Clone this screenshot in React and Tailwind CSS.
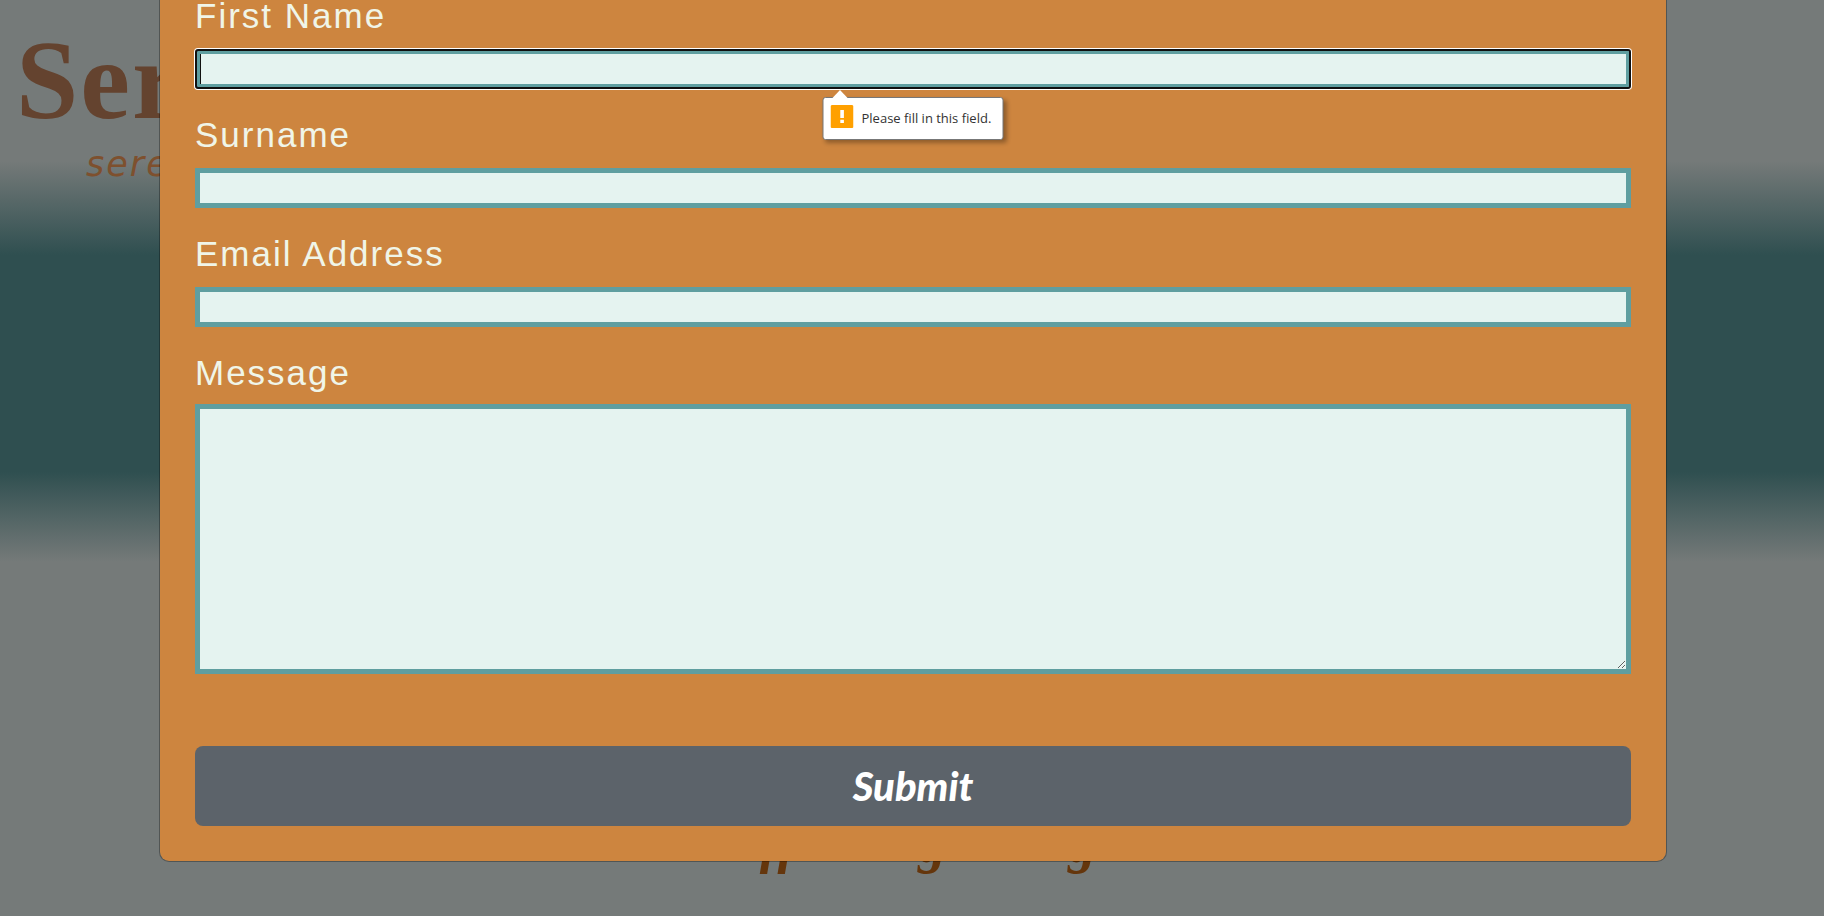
import React from "react";

const labelClass = "block text-[35px] leading-8 tracking-[2px] text-[#f0f5e8]";
const fieldClass =
  "block h-10 w-full border-[5px] border-[#5f9ea0] bg-[#e5f3f0] px-1 text-xl outline-none";

function ValidationBubble() {
  return (
    <div
      role="alert"
      className="absolute left-1/2 top-full z-10 mt-2 flex h-[43px] w-[181px] -translate-x-1/2 items-center gap-2 rounded-[3px] border border-[#777] bg-white pl-[7px] shadow-[3px_3px_4px_rgba(0,0,0,0.3)]"
    >
      <svg
        className="absolute -top-2 left-2 h-[9px] w-[17px]"
        viewBox="0 0 17 9"
        aria-hidden="true"
      >
        <path d="M0 9 L8.5 0 L17 9 Z" fill="#fff" />
      </svg>
      <svg className="mb-1 h-[23px] w-[23px] shrink-0" viewBox="0 0 23 23" aria-hidden="true">
        <rect width="23" height="23" rx="1.5" fill="#ffa000" />
        <path d="M9.8 5h3.6v8H9.8z M9.8 14.7h3.6V18H9.8z" fill="#fff" />
      </svg>
      <span className="whitespace-nowrap font-['Open_Sans',sans-serif] text-[13px] text-[#333]">
        Please fill in this field.
      </span>
    </div>
  );
}

export default function App() {
  return (
    <div className="relative flex min-h-screen flex-col justify-between overflow-hidden bg-[#757a79] bg-[linear-gradient(to_bottom,#757a79_161px,#2f4f50_255px,#2f4f50_472px,#757a79_562px)] font-['Liberation_Sans',Arial,sans-serif]">
      <header className="pl-4 pt-5">
        <p className="font-['Liberation_Serif',serif] text-[112px] font-bold leading-[120px] tracking-[2px] text-[#64432f]">
          Ser
        </p>
        <p className="pl-[70px] font-['DejaVu_Sans',sans-serif] text-[35px] italic leading-[48px] tracking-[2px] text-[#7e502e]">
          sere
        </p>
      </header>

      <footer className="flex h-[105px] justify-center pl-8 font-['Liberation_Serif',serif] text-[56px] font-bold italic leading-[64px] text-[#65360c]">
        <p className="flex gap-[122px]">
          <span>ff</span>
          <span>g</span>
          <span>g</span>
        </p>
      </footer>

      <div
        role="dialog"
        aria-label="Contact form"
        className="absolute inset-x-0 top-0 ml-[159px] mr-[157px] rounded-b-[10px] border border-t-0 border-black/30 bg-[#cd853f] bg-clip-padding px-[35px] pb-[35px]"
      >
        <form className="flex flex-col gap-[30px]" onSubmit={(e) => e.preventDefault()}>
          <div className="flex flex-col gap-[17px]">
            <label htmlFor="first-name" className={labelClass}>
              First Name
            </label>
            <div className="relative">
              <input
                id="first-name"
                type="text"
                required
                className="block h-10 w-full rounded-[3px] border-2 border-[#101010] bg-[#e5f3f0] px-2 text-xl shadow-[0_0_0_1px_#fff,inset_0_0_0_3px_#5f9ea0,inset_4px_0_0_0_#101010] outline-none"
              />
              <ValidationBubble />
            </div>
          </div>
          <div className="flex flex-col gap-[17px]">
            <label htmlFor="surname" className={labelClass}>
              Surname
            </label>
            <input id="surname" type="text" required className={fieldClass} />
          </div>
          <div className="flex flex-col gap-[17px]">
            <label htmlFor="email" className={labelClass}>
              Email Address
            </label>
            <input id="email" type="email" required className={fieldClass} />
          </div>
          <div className="flex flex-col gap-[15px]">
            <label htmlFor="message" className={labelClass}>
              Message
            </label>
            <textarea
              id="message"
              required
              className="block h-[270px] w-full resize border-[5px] border-[#5f9ea0] bg-[#e5f3f0] px-1 text-xl outline-none"
            />
          </div>
          <button
            type="submit"
            className="mt-[42px] h-20 w-full rounded-lg bg-[#5c636a] font-['Lato',cursive] text-[40px] font-black italic leading-[48px] text-white"
          >
            Submit
          </button>
        </form>
      </div>
    </div>
  );
}
